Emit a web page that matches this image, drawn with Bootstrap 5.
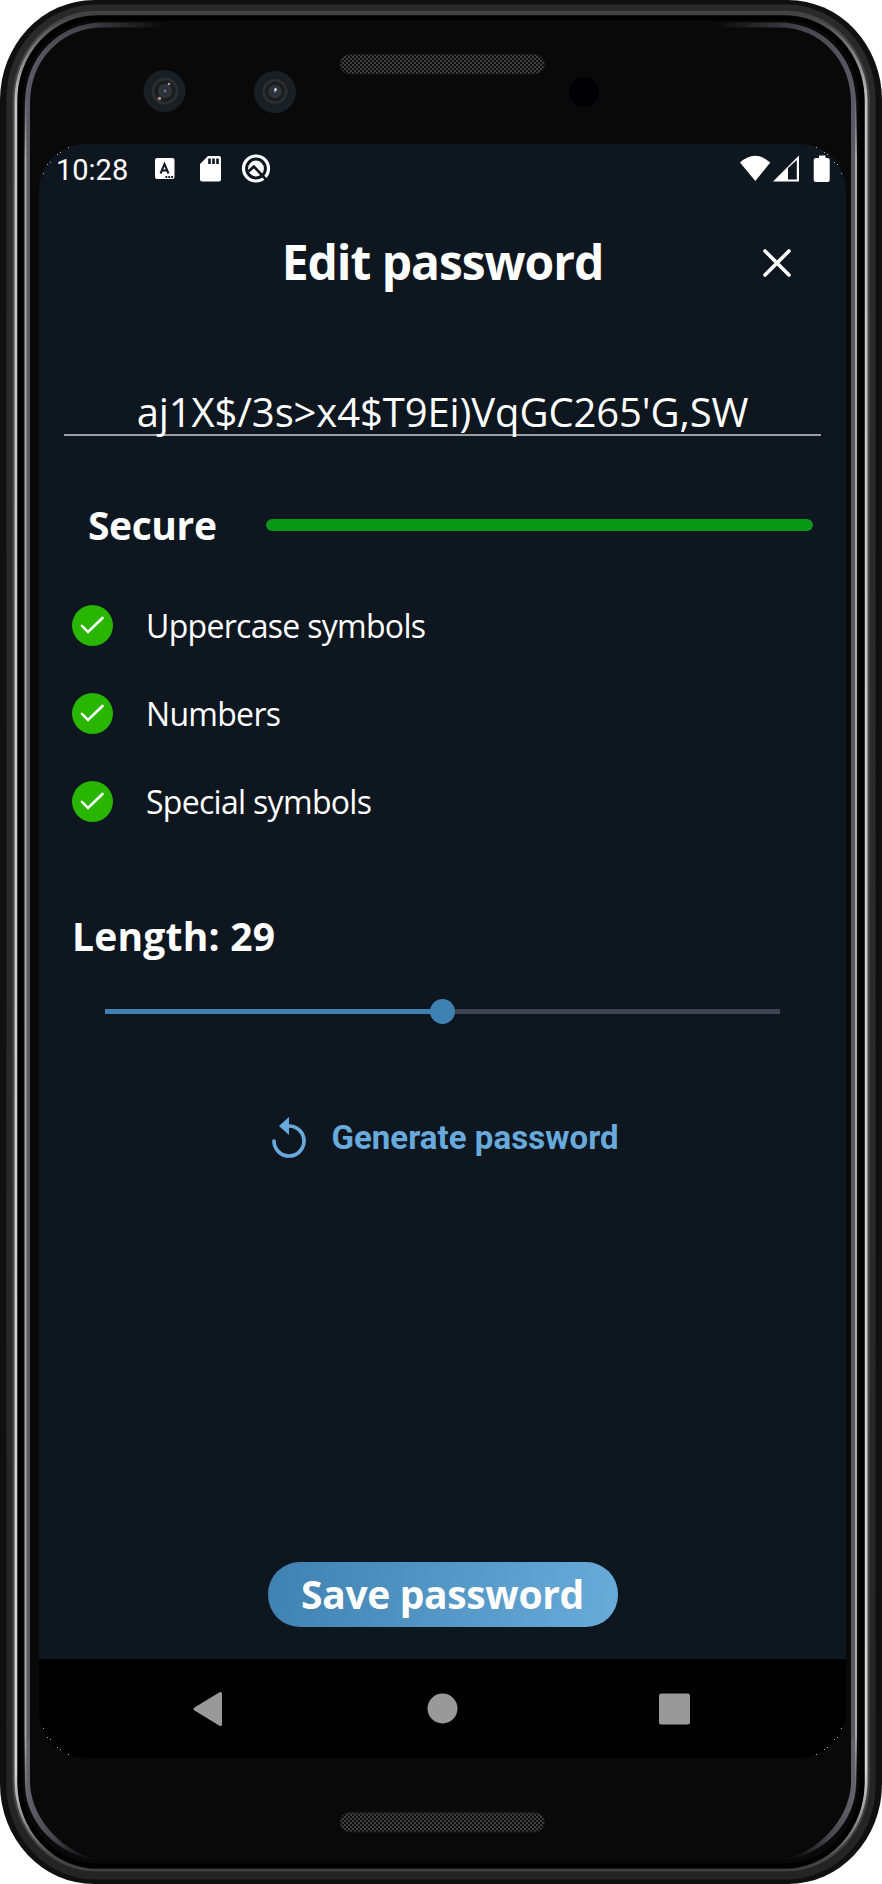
<!DOCTYPE html>
<html lang="en">
<head>
<meta charset="utf-8">
<meta name="viewport" content="width=device-width, initial-scale=1">
<title>Edit password</title>
<link href="https://cdn.jsdelivr.net/npm/bootstrap@5.3.0/dist/css/bootstrap.min.css" rel="stylesheet">
<style>
body{background:#fff;color:#fff;font-family:"Open Sans","Noto Sans",sans-serif}
.phone{width:882px;height:1884px;padding:0 36px 0 39px}
.shell{left:0;top:0;z-index:0}
.phone>div{z-index:1}
.bezel{height:144px}
.screen{height:1614px;width:807px;border-radius:46px;background:#0e1620}
.status{height:54px;padding:9px 15px 0 17px;font-family:Roboto,sans-serif}
.clock{font-size:29px;line-height:34px;width:98px}
.app{padding:0 25px}
.title-row{height:80px;margin-top:25px}
.title{font-size:48px;line-height:66px;font-weight:700;letter-spacing:-1.05px;padding-top:6px}
.close-btn{right:29px;top:25px;line-height:0}
.pw{margin-top:78px;height:55px;border:0;border-bottom:2px solid #9a9fa4;font-size:40px;line-height:62px;white-space:nowrap;letter-spacing:-.1px}
.h-label{font-size:39px;line-height:54px;font-weight:700}
.strength{margin-top:62px;padding:0 8px 0 24px;height:54px}
.strength .h-label{letter-spacing:-.4px}
.meter{height:12px;border-radius:6px;background:#343a40}
.meter .progress-bar{background:#089a16;border-radius:6px}
.checks{margin-top:53px;padding-left:8px}
.checks li{height:88.2px;font-size:32px;line-height:42px;letter-spacing:-.7px}
.checks svg{margin-right:33px}
.len{margin-top:39px;padding-left:8px;letter-spacing:.2px}
.track{margin:46px 41px 0;height:5px;background:#3f4550}
.fill{height:5px;background:#3f82b1}
.thumb{width:25px;height:25px;border-radius:50%;background:#3f82b1;top:-10px;margin-left:-12.5px}
.gen{margin-top:94px;height:60px;padding-left:6px;color:#68aadb;font-family:Roboto,sans-serif;font-size:33px;font-weight:700;letter-spacing:.05px}
.save{width:350px;height:65px;border-radius:32px;border:0;color:#fff;background:linear-gradient(100deg,#3f81b0,#69acda);font-size:39px;font-weight:700;line-height:59px;padding:0 0 2px;letter-spacing:-.35px}
.sysnav{height:99px;background:#000;border-radius:0 0 46px 46px}
</style>
</head>
<body>
<main class="phone position-relative overflow-hidden">
<svg class="shell position-absolute" width="882" height="1884" viewBox="0 0 882 1884" aria-hidden="true">
<defs>
<linearGradient id="rim" gradientUnits="userSpaceOnUse" x1="0" y1="0" x2="0" y2="1884"><stop offset="0.008" stop-color="#424242"/><stop offset=".025" stop-color="#777"/><stop offset=".055" stop-color="#c4c4c4"/><stop offset=".94" stop-color="#d4d4d4"/><stop offset=".975" stop-color="#777"/><stop offset=".992" stop-color="#303030"/></linearGradient>
<linearGradient id="inner" gradientUnits="userSpaceOnUse" x1="0" y1="0" x2="0" y2="1884"><stop offset=".05" stop-color="#aaa" stop-opacity="0"/><stop offset=".085" stop-color="#aaa"/><stop offset=".92" stop-color="#aaa"/><stop offset=".95" stop-color="#aaa" stop-opacity="0"/></linearGradient>
<linearGradient id="il" gradientUnits="userSpaceOnUse" x1="25" y1="0" x2="165" y2="0"><stop offset="0" stop-color="#5c5a64"/><stop offset=".4" stop-color="#45434c"/><stop offset="1" stop-color="#45434c" stop-opacity="0"/></linearGradient>
<linearGradient id="ir" gradientUnits="userSpaceOnUse" x1="857" y1="0" x2="715" y2="0"><stop offset="0" stop-color="#5c5a64"/><stop offset=".4" stop-color="#45434c"/><stop offset="1" stop-color="#45434c" stop-opacity="0"/></linearGradient>
<linearGradient id="bl" gradientUnits="userSpaceOnUse" x1="25" y1="0" x2="98" y2="0"><stop offset="0" stop-color="#66646c"/><stop offset=".4" stop-color="#45434c"/><stop offset="1" stop-color="#25232c" stop-opacity="0"/></linearGradient>
<linearGradient id="br" gradientUnits="userSpaceOnUse" x1="856" y1="0" x2="783" y2="0"><stop offset="0" stop-color="#66646c"/><stop offset=".4" stop-color="#45434c"/><stop offset="1" stop-color="#25232c" stop-opacity="0"/></linearGradient>
<linearGradient id="edge" x1="0" y1="0" x2="0" y2="1"><stop offset="0" stop-color="#292929"/><stop offset=".5" stop-color="#2b2b2b"/><stop offset="1" stop-color="#242424"/></linearGradient>
<radialGradient id="lens"><stop offset="0" stop-color="#7882a0"/><stop offset=".16" stop-color="#252b3a"/><stop offset=".38" stop-color="#343638"/><stop offset=".6" stop-color="#151719"/><stop offset=".85" stop-color="#303335"/><stop offset="1" stop-color="#15191c"/></radialGradient>
<pattern id="mesh" width="4" height="4" patternUnits="userSpaceOnUse"><rect width="4" height="4" fill="#0e0e0e"/><path d="M0 1h2M2 3h2" stroke="#505050" stroke-width="1.300"/></pattern>
</defs>
<rect width="882" height="1884" rx="94" ry="100" fill="#101010"/>
<rect x="6.500" y="4.500" width="869" height="1875" rx="89" ry="94" fill="url(#edge)"/>
<rect x="14" y="12.500" width="854" height="1857" rx="82" ry="88" fill="none" stroke="#444" stroke-width="3.500"/>
<rect x="16" y="14" width="850" height="1854" rx="80" ry="86" fill="#090909" stroke="url(#rim)" stroke-width="3"/>
<rect x="20" y="18" width="842" height="1848" rx="77" ry="83" fill="none" stroke="#000" stroke-width="5"/>
<path d="M170 25H104C60 25 27.500 58 27.500 104V1740" fill="none" stroke="url(#il)" stroke-width="5"/>
<path d="M25 1740H30V1784C32 1822 66 1853 98 1860C58 1856 25 1822 25 1784z" fill="url(#bl)"/>
<path d="M24.500 80h2v1720h-2z" fill="url(#inner)"/>
<path d="M713 25H778C822 25 853.500 58 853.500 104V1740" fill="none" stroke="url(#ir)" stroke-width="5"/>
<path d="M856 1740H851V1784C849 1822 815 1853 783 1860C823 1856 856 1822 856 1784z" fill="url(#br)"/>
<path d="M855 80h2v1720h-2z" fill="url(#inner)"/>
<g fill="#182026"><circle cx="164.500" cy="91" r="21"/><circle cx="275" cy="92" r="21"/></g>
<circle cx="165" cy="91" r="14.500" fill="url(#lens)"/><circle cx="275" cy="91.500" r="13.500" fill="url(#lens)"/>
<circle cx="169" cy="84" r="1.300" fill="#a99"/><circle cx="159.500" cy="98.500" r="1.800" fill="#a88"/><circle cx="275.500" cy="89.500" r="1.500" fill="#cdd4dd"/>
<circle cx="584" cy="92" r="15" fill="#010103"/>
<g fill="url(#mesh)" stroke="#1b1b1b"><rect x="340" y="54.500" width="204.500" height="19.500" rx="9.500"/><rect x="340" y="1812.500" width="204.500" height="19.500" rx="9.500"/></g>
</svg>
<div class="bezel"></div>
<div class="screen position-relative d-flex flex-column">
<div class="status d-flex align-items-start">
<span class="clock">10:28</span>
<svg width="100" height="32" viewBox="154 153 100 32"><rect x="155" y="158" width="19.500" height="21" rx="2" fill="#fff"/><path d="M160.500 173.500l4-9.500 4 9.500M162 170.500h5" fill="none" stroke="#0e1620" stroke-width="2"/><path d="M165.500 177h1.800m1 0h1.800m1 0h1.800" stroke="#0e1620" stroke-width="2"/><path d="M208 156h11q2 0 2 2v21.500q0 2-2 2h-17q-2 0-2-2V164z" fill="#fff"/><path d="M209.500 158.500v5.500m4-5.500v5.500m4-5.500v5.500" stroke="#0e1620" stroke-width="2.600"/></svg>
<svg style="margin-left:-14px" width="32" height="32" viewBox="240 153 32 32" fill="none"><circle cx="256" cy="168.500" r="12.500" stroke="#fff" stroke-width="3.200"/><circle cx="256" cy="168.500" r="7.900" fill="#fff"/><path d="M248.500 171.500l5.300-5 12.700 13.500" stroke="#0e1620" stroke-width="2.600"/></svg>
<svg class="ms-auto" width="92" height="32" viewBox="739 153 92 32" fill="#fff"><path d="M740 162.500Q755 149 770.300 162.500L755.300 181z"/><path d="M773 181.500L799 155.500V181.500z"/><path d="M788 179.500V168l8.800-8v19.500z" fill="#0e1620"/><path d="M819 155.500h6.500v2.500h2q2.200 0 2.200 2v20q0 2-2 2h-12q-2 0-2-2v-20q0-2 2-2h3.300z"/></svg>
</div>
<div class="app flex-grow-1 d-flex flex-column">
<header class="title-row position-relative text-center">
<h1 class="title mb-0"><span>Edit password</span></h1>
<a class="close-btn position-absolute" href="#" aria-label="Close"><svg width="30" height="30" viewBox="0 0 30 30"><path d="M3 3l24 24M27 3L3 27" stroke="#fff" stroke-width="3.600" stroke-linecap="round"/></svg></a>
</header>
<div class="pw text-center"><span>aj1X$/3s&gt;x4$T9Ei)VqGC265'G,SW</span></div>
<div class="strength d-flex align-items-center"><span class="h-label">Secure</span><div class="progress meter ms-auto" style="width:547px"><div class="progress-bar" style="width:100%"></div></div></div>
<ul class="checks list-unstyled mb-0">
<li class="d-flex align-items-start"><svg width="41" height="41" viewBox="0 0 41 41"><circle cx="20.500" cy="20.500" r="20.500" fill="#29b600"/><path d="M10 20.800l6 6.200 14.500-14" fill="none" stroke="#fff" stroke-width="2.600" stroke-linecap="round"/></svg><span>Uppercase symbols</span></li>
<li class="d-flex align-items-start"><svg width="41" height="41" viewBox="0 0 41 41"><circle cx="20.500" cy="20.500" r="20.500" fill="#29b600"/><path d="M10 20.800l6 6.200 14.500-14" fill="none" stroke="#fff" stroke-width="2.600" stroke-linecap="round"/></svg><span>Numbers</span></li>
<li class="d-flex align-items-start"><svg width="41" height="41" viewBox="0 0 41 41"><circle cx="20.500" cy="20.500" r="20.500" fill="#29b600"/><path d="M10 20.800l6 6.200 14.500-14" fill="none" stroke="#fff" stroke-width="2.600" stroke-linecap="round"/></svg><span>Special symbols</span></li>
</ul>
<div class="len h-label"><span>Length: 29</span></div>
<div class="track position-relative"><div class="fill" style="width:50%"></div><div class="thumb position-absolute" style="left:50%"></div></div>
<div class="gen d-flex align-items-center justify-content-center"><svg class="me-4" width="35" height="42" viewBox="0 0 35 42"><path d="M2 24A15 15 0 1 0 17 9" fill="none" stroke="#68aadb" stroke-width="3.700" stroke-linecap="round"/><path d="M17 0v18L7 9z" fill="#68aadb"/></svg><span>Generate password</span></div>
<button class="save btn mx-auto mt-auto" type="button"><span>Save password</span></button>
<div style="height:32px"></div>
</div>
<nav class="sysnav"><svg width="807" height="99" viewBox="39 1659 807 99" fill="#999"><path d="M194.500 1710.500q-2-1.500 0-3L219.500 1692.200q2.500-.8 2.500 1.500v30.600q0 2.300-2.500 1.500z"/><circle cx="442.500" cy="1708.500" r="15"/><rect x="659" y="1693.500" width="31" height="31" rx="2.500"/></svg></nav>
<svg class="position-absolute top-0 start-0" width="807" height="1614" viewBox="0 0 807 1614" fill="#aaa" aria-hidden="true" style="pointer-events:none">
<defs><g id="dots"><path d="M29 3h1v1h-1zM21 8h1v1h-1zM18 10h1v1h-1zM11 18h1v1h-1zM8 20h1v1h-1zM4 29h1v1h-1z"/></g></defs>
<use href="#dots"/><use href="#dots" transform="matrix(-1 0 0 1 807 0)"/><use href="#dots" transform="matrix(1 0 0 -1 0 1614)"/><use href="#dots" transform="matrix(-1 0 0 -1 807 1614)"/></svg>
</div>
</main>
<script src="https://cdn.jsdelivr.net/npm/bootstrap@5.3.0/dist/js/bootstrap.bundle.min.js"></script>
</body>
</html>
